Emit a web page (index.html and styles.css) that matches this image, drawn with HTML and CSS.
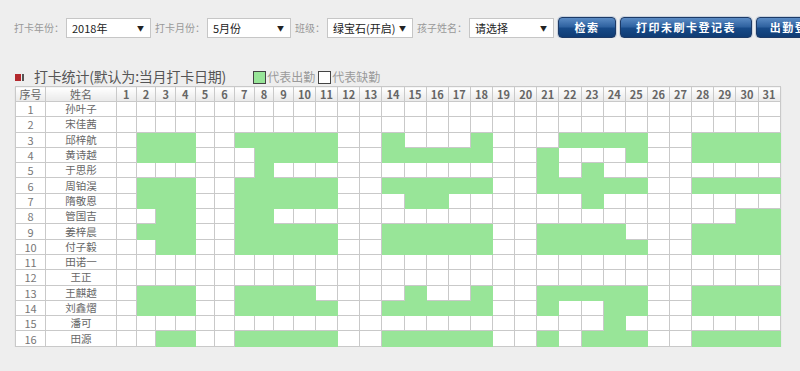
FILE: index.html
```html
<!DOCTYPE html>
<html lang="zh-CN">
<head>
<meta charset="utf-8">
<title>打卡统计</title>
<link rel="stylesheet" href="styles.css">
</head>
<body>
<div class="toolbar">
  <span class="lbl">打卡年份：</span>
  <div class="sel w85"><span>2018年</span><span class="arr">▼</span></div>
  <span class="lbl">打卡月份：</span>
  <div class="sel w84"><span>5月份</span><span class="arr">▼</span></div>
  <span class="lbl">班级：</span>
  <div class="sel w86"><span>绿宝石(开启)</span><span class="arr">▼</span></div>
  <span class="lbl">孩子姓名：</span>
  <div class="sel w85"><span>请选择</span><span class="arr">▼</span></div>
  <button class="btn b1">检索</button>
  <button class="btn b2">打印未刷卡登记表</button>
  <button class="btn b3">出勤登记表</button>
</div>
<div class="title-row">
  <span class="ico"><i class="red"></i><i class="gray"></i></span>
  <span class="title">打卡统计(默认为:当月打卡日期)</span>
  <span class="legend"><i class="box on"></i>代表出勤<i class="box off"></i>代表缺勤</span>
</div>
<table class="grid">
  <colgroup id="cols"></colgroup>
  <thead><tr id="head"></tr></thead>
  <tbody id="body"></tbody>
</table>
<script src="script.js"></script>
</body>
</html>
```
FILE: styles.css
```css
html, body { margin: 0; padding: 0; }
body {
  background: #eeeeee;
  font-family: "Noto Sans CJK SC", "Liberation Sans", sans-serif;
  color: #555;
  width: 800px;
  overflow: hidden;
}
.toolbar {
  display: flex;
  align-items: center;
  padding: 17px 0 0 14px;
  height: 21px;
  white-space: nowrap;
  overflow: hidden;
}
.lbl {
  font-size: 10px;
  color: #999;
  line-height: 21px;
  margin-right: 2px;
}
.sel {
  box-sizing: border-box;
  height: 20px;
  background: #fff;
  border: 1px solid #c6c6c6;
  display: flex;
  align-items: center;
  justify-content: space-between;
  padding: 0 6px 0 5px;
  font-size: 11px;
  color: #222;
  margin-right: 4px;
  flex: none;
}
.w85 { width: 85px; }
.w84 { width: 84px; }
.w86 { width: 86px; }
.arr { font-size: 7px; color: #222; }
.btn {
  flex: none;
  box-sizing: border-box;
  height: 21px;
  margin: 0 4px 0 0;
  padding: 0;
  border: 1px solid #1d3a66;
  border-radius: 4px;
  background: linear-gradient(#5b8bc4 0%, #2f62a0 46%, #174a88 54%, #103c74 100%);
  box-shadow: 0 0 0 1px #c9d3e0;
  color: #fff;
  font-family: "Noto Sans CJK SC", sans-serif;
  font-size: 11px;
  font-weight: bold;
  letter-spacing: 1.5px;
  line-height: 19px;
}
.b1 { width: 58px; }
.b2 { width: 132px; }
.b3 { width: 90px; }
.title-row {
  display: flex;
  align-items: center;
  margin: 28px 0 0 15px;
  height: 20px;
}
.ico { display: flex; gap: 1px; margin-right: 10px; margin-top: 2px; }
.ico i { display: block; height: 7px; }
.ico .red { width: 6px; background: #b3282d; }
.ico .gray { width: 2px; background: #555; }
.title {
  font-size: 14px;
  line-height: 20px;
  color: #555;
  letter-spacing: -0.2px;
}
.legend {
  display: flex;
  align-items: center;
  margin-left: 27px;
  font-size: 12px;
  color: #9a9a9a;
  line-height: 14px;
  margin-top: 2px;
}
.box {
  display: block;
  box-sizing: border-box;
  width: 13px;
  height: 13px;
  border: 1px solid #444;
  margin-right: 1px;
}
.box.on { background: #98e598; }
.box.off { background: #fff; margin-left: 3px; }
.grid {
  margin-left: 15px;
  width: 765px;
  table-layout: fixed;
  border-collapse: collapse;
  box-shadow: 0 1px 1px rgba(0,0,0,0.12);
}
.grid th, .grid td {
  border: 1px solid #c9c9c9;
  padding: 0;
  text-align: center;
  overflow: hidden;
  white-space: nowrap;
}
.grid th {
  height: 14px;
  background: linear-gradient(#ffffff, #e9e9e9);
  font-size: 11px;
  font-weight: bold;
  color: #666;
  line-height: 14px;
}
.grid th.cjk { font-weight: normal; color: #666; font-size: 11px; }
.grid td {
  height: 14.3px;
  background: #fff;
  font-size: 11px;
  line-height: 14px;
  color: #777;
}
.grid td.nm { font-size: 10.5px; color: #666; }
.grid td.g { background: #98e598; border-color: #98e598; }
```
FILE: script.js
```js
var names = ["孙叶子","宋佳茜","邱梓航","黄诗越","于思彤","周铂淏","隋敬恩","管国吉","姜梓晨","付子毅","田诺一","王正","王麒越","刘鑫熠","潘可","田源"];
var data = [
  "0000000000000000000000000000000",
  "0000000000000000000000000000000",
  "0111001111100100010001111001111",
  "0111000111100111110010001001111",
  "0000000100000000000010100000000",
  "0111001111100111110011111001111",
  "0111001111100011000000100000000",
  "0011001100000000000000000000011",
  "0111001111100111110011110001111",
  "0011001111100111110011111001111",
  "0000000000000000000000000000000",
  "0000000000000000000000000000000",
  "0111001111000010010011111001111",
  "0111001111100111110010011001111",
  "0000000000000000000000010000000",
  "0011001111100111110010111001111"
];
var cols = document.getElementById("cols");
var ch = '<col style="width:30px"><col style="width:71px">';
for (var c = 1; c <= 31; c++) ch += '<col style="width:' + (c <= 9 ? 19.67 : 22.136) + 'px">';
cols.innerHTML = ch;
var head = document.getElementById("head");
var hh = '<th class="cjk">序号</th><th class="cjk">姓名</th>';
for (var d = 1; d <= 31; d++) hh += "<th>" + d + "</th>";
head.innerHTML = hh;
var body = document.getElementById("body");
var rows = "";
for (var i = 0; i < names.length; i++) {
  rows += '<tr><td class="no">' + (i + 1) + '</td><td class="nm">' + names[i] + "</td>";
  for (var k = 0; k < 31; k++) rows += data[i].charAt(k) === "1" ? '<td class="g"></td>' : "<td></td>";
  rows += "</tr>";
}
body.innerHTML = rows;
```
